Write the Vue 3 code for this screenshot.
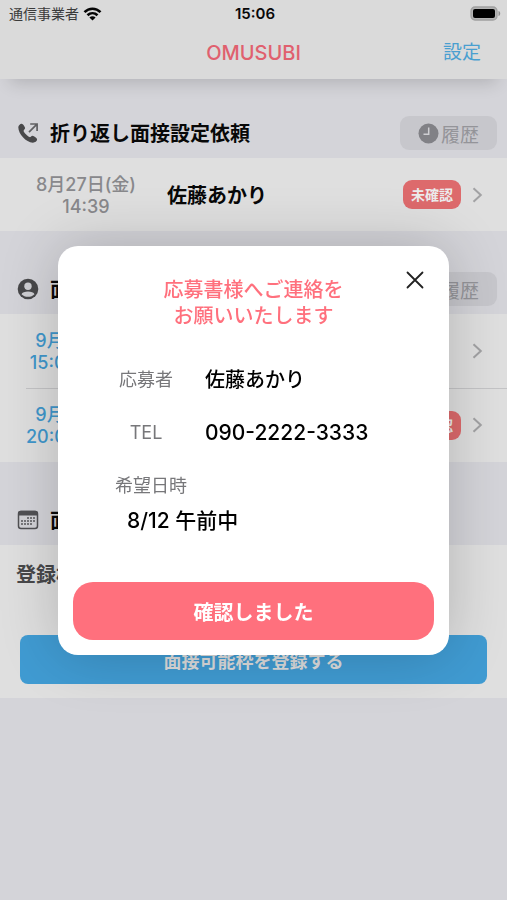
<script setup>
import { ref } from 'vue'

const open = ref(true)

const callbacks = [{ date: '8月27日(金)', time: '14:39', name: '佐藤あかり', unread: true }]
const interviews = [
  { date: '9月20日(金)', time: '15:00〜15:30', name: '佐藤あかり', unread: false },
  { date: '9月20日(金)', time: '20:00〜20:30', name: '佐藤あかり', unread: true }
]
const days = [
  [10, 8], [13, 8], [16, 8],
  [4, 11], [7, 11], [10, 11], [13, 11], [16, 11],
  [4, 14], [7, 14], [10, 14], [13, 14]
]
</script>

<template>
  <div class="screen">
    <header class="top">
      <div class="status">
        <span class="carrier">通信事業者
          <svg width="19" height="14" viewBox="0 0 18 14" aria-hidden="true">
            <g fill="none" stroke="#050505" stroke-width="2.6">
              <path d="M1 5.2C5.600 .6 12.400 .6 17 5.200" />
              <path d="M4 8.300C6.900 5.500 11.100 5.500 14 8.300" />
            </g>
            <path d="M9 13.500L5.900 10.400C7.600 8.900 10.400 8.900 12.100 10.400Z" fill="#050505" />
          </svg>
        </span>
        <span class="clock">15:06</span>
        <svg class="battery" width="31" height="15" viewBox="0 0 31 15" aria-hidden="true">
          <rect x="1" y="1" width="26" height="13" rx="4" fill="#b4b4b4" stroke="#a0a0a0" stroke-width="1.300" />
          <rect x="3" y="3" width="22" height="9" rx="2" fill="#000" />
          <path d="M28.500 5C30.800 5.600 30.800 9.400 28.500 10Z" fill="#8e8e8e" />
        </svg>
      </div>
      <nav class="nav">
        <h1>OMUSUBI</h1>
        <a href="#settings">設定</a>
      </nav>
    </header>

    <main>
      <section>
        <div class="head first">
          <svg width="22" height="22" viewBox="0 0 22 22" aria-hidden="true">
            <path d="M1.300 5.200C1.300 3.500 3.300 1.600 4.600 1.700C6.100 1.800 8 4.800 8.100 6.100C8.200 7.400 6.500 8 6.600 9C6.800 10.400 10.700 14.500 12.600 15.100C13.700 15.400 14.300 13.700 15.500 13.800C17.100 14 20.100 16.100 20.100 17.600C20.100 19.200 17.700 20.800 15.800 20.700C9 20.200 1.300 12 1.300 5.200Z" fill="#48484a" />
            <path d="M12 10.200L19.700 2.400M13.200 2H20.100V8.900" fill="none" stroke="#606063" stroke-width="1.700" />
          </svg>
          <h2>折り返し面接設定依頼</h2>
          <button class="history" type="button">
            <svg width="21" height="21" viewBox="0 0 21 21" aria-hidden="true">
              <circle cx="10.500" cy="10.500" r="10" fill="#818186" />
              <path d="M10.700 4.500V11.300H5.500" fill="none" stroke="#cfcfd3" stroke-width="1.500" />
            </svg>履歴
          </button>
        </div>
        <ul class="list">
          <li v-for="c in callbacks" :key="c.time" class="row">
            <div class="when muted">{{ c.date }}<br>{{ c.time }}</div>
            <strong class="name">{{ c.name }}</strong>
            <span v-if="c.unread" class="badge">未確認</span>
            <svg class="chev" width="11" height="16" viewBox="0 0 11 16" aria-hidden="true"><path d="M1.500 1.200L8.800 8L1.500 14.800" /></svg>
          </li>
        </ul>
      </section>

      <section>
        <div class="head">
          <svg width="22" height="22" viewBox="0 0 22 22" aria-hidden="true">
            <circle cx="11" cy="11" r="10.300" fill="#48484a" />
            <circle cx="11" cy="8.200" r="3.700" fill="#cfcfd3" />
            <path d="M4.500 16.300C5.600 12.500 16.400 12.500 17.500 16.300C14.500 19.700 7.500 19.700 4.500 16.300Z" fill="#cfcfd3" />
          </svg>
          <h2>面接予定</h2>
          <button class="history" type="button">
            <svg width="21" height="21" viewBox="0 0 21 21" aria-hidden="true">
              <circle cx="10.500" cy="10.500" r="10" fill="#818186" />
              <path d="M10.700 4.500V11.300H5.500" fill="none" stroke="#cfcfd3" stroke-width="1.500" />
            </svg>履歴
          </button>
        </div>
        <ul class="list">
          <li v-for="i in interviews" :key="i.time" class="row">
            <div class="when">{{ i.date }}<br>{{ i.time }}</div>
            <strong class="name">{{ i.name }}</strong>
            <span v-if="i.unread" class="badge">未確認</span>
            <svg class="chev" width="11" height="16" viewBox="0 0 11 16" aria-hidden="true"><path d="M1.500 1.200L8.800 8L1.500 14.800" /></svg>
          </li>
        </ul>
      </section>

      <section>
        <div class="head">
          <svg width="22" height="22" viewBox="0 0 22 22" aria-hidden="true">
            <rect x="1.500" y="2.500" width="19" height="17" rx="2.500" fill="#d2d2d6" stroke="#515154" stroke-width="1.500" />
            <path d="M1 6.500V4.500Q1 1.800 3.800 1.800H18.200Q21 1.800 21 4.500V6.500Z" fill="#515154" />
            <rect v-for="d in days" :key="d.join()" :x="d[0]" :y="d[1]" width="2" height="2" fill="#77777a" />
          </svg>
          <h2>面接可能枠</h2>
        </div>
        <div class="slots">
          <p>登録枠はありません</p>
          <button class="register" type="button">面接可能枠を登録する</button>
        </div>
      </section>
    </main>

    <div v-if="open" class="overlay">
      <div class="dialog" role="dialog" aria-modal="true" aria-labelledby="dialog-title">
        <button class="close" type="button" aria-label="閉じる" @click="open = false">
          <svg width="18" height="18" viewBox="0 0 18 18" aria-hidden="true">
            <path d="M1.500 1.500L16.500 16.500M16.500 1.500L1.500 16.500" fill="none" stroke="#222" stroke-width="1.800" stroke-linecap="round" />
          </svg>
        </button>
        <h2 id="dialog-title">応募書様へご連絡を<br>お願いいたします</h2>
        <dl>
          <div class="pair">
            <dt>応募者</dt>
            <dd>佐藤あかり</dd>
          </div>
          <div class="pair">
            <dt>TEL</dt>
            <dd class="tel">090-2222-3333</dd>
          </div>
          <div class="wish">
            <dt>希望日時</dt>
            <dd>8/12 午前中</dd>
          </div>
        </dl>
        <button class="confirm" type="button" @click="open = false">確認しました</button>
      </div>
    </div>
  </div>
</template>

<style>
body {
  margin: 0;
  background: #d4d4d9;
}
</style>

<style scoped>
.screen {
  min-height: 100vh;
  font-family: Inter, "Noto Sans CJK JP", sans-serif;
  color: #080808;
  background: #d4d4d9;
}
h1, h2, p, ul, dl, dd {
  margin: 0;
  padding: 0;
}
button {
  font-family: inherit;
  border: 0;
  padding: 0;
  cursor: pointer;
}
svg {
  flex: none;
}
.top {
  position: relative;
  background: #dadada;
  box-shadow: 0 14px 16px -10px rgba(0, 0, 0, 0.16);
}
.status {
  display: grid;
  grid-template-columns: 1fr auto 1fr;
  align-items: center;
  height: 27px;
  padding: 0 6px 0 9px;
}
.carrier {
  display: flex;
  align-items: center;
  gap: 4px;
  font-size: 14px;
  line-height: 20px;
  color: #3a3a3a;
}
.clock {
  font-size: 15px;
  font-weight: 600;
}
.battery {
  justify-self: end;
}
.nav {
  display: grid;
  grid-template-columns: 1fr auto 1fr;
  align-items: center;
  height: 52px;
  padding: 0 26px;
}
.nav h1 {
  grid-column: 2;
  font-size: 20px;
  font-weight: 500;
  color: #e0606e;
}
.nav a {
  justify-self: end;
  font-size: 19px;
  line-height: 26px;
  color: #4a9fd0;
  text-decoration: none;
}
.head {
  display: flex;
  align-items: center;
  min-height: 34px;
  padding: 41px 10px 8px 17px;
}
.head.first {
  padding-top: 37px;
}
.head h2 {
  flex: 1;
  margin-left: 11px;
  padding-top: 2px;
  font-size: 20px;
  line-height: 26px;
  font-weight: 600;
}
.history {
  display: flex;
  align-items: center;
  justify-content: center;
  gap: 2px;
  width: 97px;
  height: 34px;
  border-radius: 9px;
  background: #c7c7cc;
  color: #949499;
  font-size: 19px;
}
.list {
  list-style: none;
  background: #dfdfdf;
}
.row {
  position: relative;
  display: flex;
  align-items: center;
  height: 74px;
  padding: 0 24px 0 26px;
}
.first + .list .row {
  height: 73px;
}
.row + .row::before {
  content: "";
  position: absolute;
  top: 0;
  left: 26px;
  right: 0;
  height: 1px;
  background: #c4c4c6;
}
.when {
  width: 120px;
  padding-top: 2px;
  text-align: center;
  white-space: nowrap;
  font-size: 18px;
  line-height: 22px;
  font-weight: 500;
  color: #4097cc;
}
.when.muted {
  color: #88888b;
}
.name {
  flex: 1;
  margin-left: 21px;
  font-size: 20px;
  font-weight: 600;
}
.badge {
  padding: 0 8px;
  border-radius: 9px;
  font-size: 14px;
  line-height: 29px;
  font-weight: 600;
  color: #ececec;
  background: #dd6a6c;
}
.chev {
  margin-left: 11px;
  fill: none;
  stroke: #a2a2a4;
  stroke-width: 2;
}
.slots {
  padding: 17px 20px 14px;
  background: #dfdfdf;
}
.slots p {
  margin: 0 -4px 47px;
  font-size: 20px;
  line-height: 26px;
  font-weight: 600;
  color: #48484a;
}
.register {
  display: block;
  width: 100%;
  height: 49px;
  border-radius: 8px;
  font-size: 18px;
  font-weight: 600;
  color: #dcdcdc;
  background: #409bd2;
}
.overlay {
  position: fixed;
  inset: 0;
  display: flex;
  align-items: center;
  justify-content: center;
  padding: 1px 58px 0;
}
.dialog {
  position: relative;
  box-sizing: border-box;
  width: 100%;
  max-width: 480px;
  padding: 31px 15px 15px;
  border-radius: 20px;
  background: #fff;
  box-shadow: 0 0 60px rgba(0, 0, 0, 0.2);
}
.close {
  position: absolute;
  top: 17px;
  right: 17px;
  display: flex;
  align-items: center;
  justify-content: center;
  width: 34px;
  height: 34px;
  background: none;
}
.dialog h2 {
  text-align: center;
  font-size: 20px;
  line-height: 26px;
  font-weight: 500;
  color: #ff707d;
}
dl {
  display: grid;
  gap: 27px;
  padding: 38px 0 48px 42px;
}
.pair {
  display: grid;
  grid-template-columns: 62px 1fr;
  column-gap: 28px;
  align-items: center;
}
.pair dt {
  text-align: center;
}
dt {
  font-size: 18px;
  line-height: 26px;
  color: #77777a;
}
dd {
  font-size: 20px;
  line-height: 26px;
  font-weight: 500;
  color: #000;
}
dd.tel {
  font-size: 21px;
}
.wish dd {
  margin: 9px 0 0 12px;
  font-size: 21px;
}
.confirm {
  display: block;
  width: 100%;
  height: 58px;
  border-radius: 20px;
  font-size: 20px;
  font-weight: 600;
  color: #fff;
  background: #ff707d;
}
</style>
